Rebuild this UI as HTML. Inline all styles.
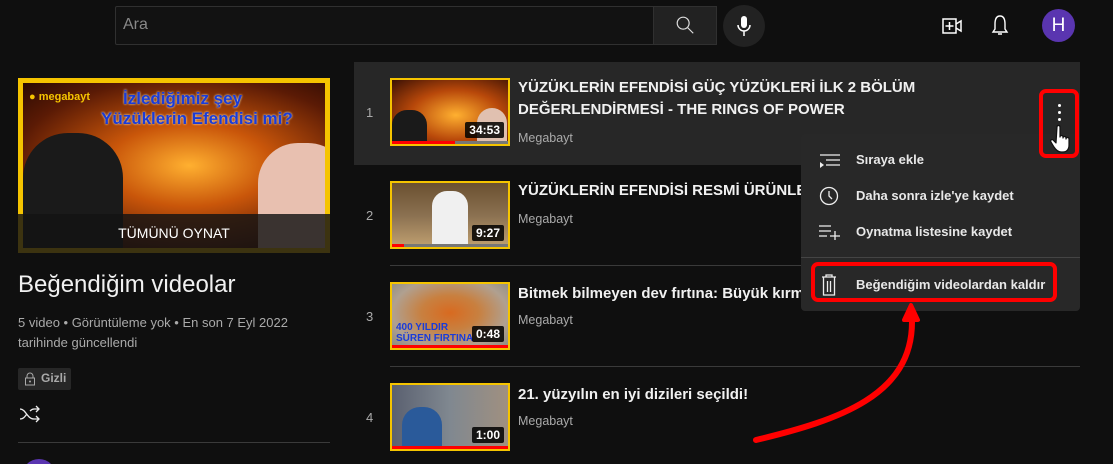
<!DOCTYPE html>
<html><head><meta charset="utf-8"><style>
*{margin:0;padding:0;box-sizing:border-box}
html,body{width:1113px;height:464px;overflow:hidden}
body{background:#0f0f0f;font-family:"Liberation Sans",Arial,sans-serif;color:#f1f1f1;position:relative}
.abs{position:absolute}
.thumb{position:absolute;left:390px;width:120px;height:68px;border:2px solid #f5c400;overflow:hidden}
.dur{position:absolute;right:4px;bottom:6px;background:rgba(0,0,0,.85);color:#fff;font-weight:bold;font-size:12px;padding:1px 4px;border-radius:2px}
.bar{position:absolute;left:0;bottom:0;height:3px;background:#777;width:100%}
.bar i{display:block;height:3px;background:#f00}
.num{position:absolute;left:366px;font-size:13px;color:#aaa}
.t{position:absolute;left:518px;font-size:15px;font-weight:bold;line-height:22px;color:#f1f1f1;white-space:nowrap}
.ch{position:absolute;left:518px;font-size:12.5px;color:#aaa}
.mi{position:absolute;left:856px;font-size:13px;font-weight:bold;color:#e8e8e8}
</style></head><body>
<!-- header -->
<div class="abs" style="left:115px;top:6px;width:539px;height:39px;border:1px solid #303030;background:#121212;border-radius:2px 0 0 2px"></div>
<div class="abs" style="left:123px;top:16px;font-size:16px;color:#888">Ara</div>
<div class="abs" style="left:653px;top:6px;width:64px;height:39px;background:#222;border:1px solid #303030"></div>
<svg class="abs" style="left:674px;top:14px" width="22" height="22" viewBox="0 0 24 24"><circle cx="10" cy="10" r="6.5" fill="none" stroke="#ddd" stroke-width="1.3"/><path d="M15 15l6 6" stroke="#ddd" stroke-width="1.3"/></svg>
<div class="abs" style="left:723px;top:5px;width:42px;height:42px;border-radius:50%;background:#222"></div>
<svg class="abs" style="left:734px;top:14px" width="20" height="24" viewBox="0 0 20 24"><rect x="7" y="2" width="6" height="12" rx="3" fill="#fff"/><path d="M4 11a6 6 0 0012 0M10 17v5" stroke="#fff" stroke-width="1.5" fill="none"/></svg>
<svg class="abs" style="left:940px;top:14px" width="24" height="24" viewBox="0 0 24 24"><rect x="3" y="5" width="13" height="14" fill="none" stroke="#fff" stroke-width="1.5"/><path d="M16 10l5-3v10l-5-3M9.5 8v8M5.5 12h8" stroke="#fff" stroke-width="1.5" fill="none"/></svg>
<svg class="abs" style="left:988px;top:13px" width="24" height="26" viewBox="0 0 24 26"><path d="M12 3c-4 0-5 4-5 8v5l-2 3h14l-2-3v-5c0-4-1-8-5-8zM10 21h4" stroke="#fff" stroke-width="1.4" fill="none"/></svg>
<div class="abs" style="left:1042px;top:9px;width:33px;height:33px;border-radius:50%;background:#5a35b0;color:#fff;font-size:19px;text-align:center;line-height:33px">H</div>
<!-- left panel -->
<div class="abs" style="left:18px;top:78px;width:312px;height:175px;border:5px solid #f5c400;background:radial-gradient(ellipse at 55% 50%,#ffb030 0%,#c9560a 35%,#5a1a05 75%,#2a0a02 100%);overflow:hidden">
<div class="abs" style="left:0;top:50px;width:100px;height:140px;background:#1a1a1a;border-radius:45px 45px 0 0"></div>
<div class="abs" style="left:235px;top:60px;width:90px;height:120px;background:#e8c0b0;border-radius:40px 40px 0 0"></div>
<div class="abs" style="left:100px;top:6px;font-size:17px;font-weight:bold;color:#1a3bd8;text-shadow:0 0 2px #ffd">İzlediğimiz şey</div>
<div class="abs" style="left:78px;top:26px;font-size:17px;font-weight:bold;color:#1a3bd8;text-shadow:0 0 2px #ffd">Yüzüklerin Efendisi mi?</div>
<div class="abs" style="left:6px;top:8px;font-size:11px;font-weight:bold;color:#f5c400">● megabayt</div>
</div>
<div class="abs" style="left:18px;top:214px;width:312px;height:39px;background:rgba(20,20,20,.82);text-align:center;font-size:14px;line-height:39px;color:#fff">TÜMÜNÜ OYNAT</div>
<div class="abs" style="left:18px;top:271px;font-size:24px;color:#f1f1f1">Beğendiğim videolar</div>
<div class="abs" style="left:18px;top:313px;font-size:13px;line-height:20px;color:#aaa">5 video • Görüntüleme yok • En son 7 Eyl 2022<br>tarihinde güncellendi</div>
<div class="abs" style="left:18px;top:368px;width:53px;height:22px;background:#272727;border-radius:2px"></div>
<svg class="abs" style="left:24px;top:372px" width="12" height="14" viewBox="0 0 12 14"><path d="M3 6V4a3 3 0 016 0v2" stroke="#aaa" fill="none"/><rect x="1.5" y="6" width="9" height="7" stroke="#aaa" fill="none"/><circle cx="6" cy="9.5" r="1" fill="#aaa"/></svg>
<div class="abs" style="left:41px;top:371px;font-size:12px;font-weight:bold;color:#aaa">Gizli</div>
<svg class="abs" style="left:18px;top:404px" width="24" height="20" viewBox="0 0 24 20"><path d="M2 5c6 0 7 10 14 10h4M2 15c4 0 5-3 7-5M12 7c1-1 2-2 4-2h4M18 2l3 3-3 3M18 12l3 3-3 3" stroke="#eee" stroke-width="1.3" fill="none"/></svg>
<div class="abs" style="left:18px;top:442px;width:312px;height:1px;background:#3a3a3a"></div>
<div class="abs" style="left:22px;top:459px;width:34px;height:5px;overflow:hidden"><div style="width:34px;height:34px;border-radius:50%;background:#5a35b0"></div></div>
<!-- list -->
<div class="abs" style="left:354px;top:62px;width:726px;height:103px;background:#272727"></div>
<div class="abs" style="left:390px;top:265px;width:690px;height:1px;background:#3a3a3a"></div>
<div class="abs" style="left:390px;top:366px;width:690px;height:1px;background:#3a3a3a"></div>

<div class="num" style="top:105px">1</div>
<div class="thumb" style="top:78px;background:radial-gradient(ellipse at 55% 55%,#ffb030,#b8480a 50%,#3a1004)"><div class="abs" style="left:0;top:30px;width:35px;height:40px;background:#1a1a1a;border-radius:15px 15px 0 0"></div><div class="abs" style="left:85px;top:28px;width:30px;height:40px;background:#e0c0b0;border-radius:15px 15px 0 0"></div><div class="dur">34:53</div><div class="bar"><i style="width:54%"></i></div></div>
<div class="t" style="top:77px">YÜZÜKLERİN EFENDİSİ GÜÇ YÜZÜKLERİ İLK 2 BÖLÜM<br>DEĞERLENDİRMESİ - THE RINGS OF POWER</div>
<div class="ch" style="top:131px">Megabayt</div>

<div class="num" style="top:208px">2</div>
<div class="thumb" style="top:181px;background:linear-gradient(180deg,#6a5030,#8a7050 50%,#c0a070)"><div class="abs" style="left:40px;top:8px;width:36px;height:60px;background:#f0f0f0;border-radius:15px 15px 0 0"></div><div class="dur">9:27</div><div class="bar"><i style="width:10%"></i></div></div>
<div class="t" style="top:180px">YÜZÜKLERİN EFENDİSİ RESMİ ÜRÜNLERİ</div>
<div class="ch" style="top:212px">Megabayt</div>

<div class="num" style="top:309px">3</div>
<div class="thumb" style="top:282px;background:radial-gradient(ellipse at 50% 45%,#d86a20,#c88040 35%,#b0a090 70%,#8a8a80)"><div class="abs" style="left:4px;top:38px;font-size:10px;font-weight:bold;color:#1a3bd8">400 YILDIR<br>SÜREN FIRTINA</div><div class="dur">0:48</div><div class="bar"><i style="width:100%"></i></div></div>
<div class="t" style="top:283px">Bitmek bilmeyen dev fırtına: Büyük kırmızı leke</div>
<div class="ch" style="top:313px">Megabayt</div>

<div class="num" style="top:410px">4</div>
<div class="thumb" style="top:383px;background:linear-gradient(90deg,#5a6070,#808890 50%,#a09080)"><div class="abs" style="left:10px;top:22px;width:40px;height:50px;background:#2a5a9a;border-radius:18px 18px 0 0"></div><div class="dur">1:00</div><div class="bar"><i style="width:100%"></i></div></div>
<div class="t" style="top:384px">21. yüzyılın en iyi dizileri seçildi!</div>
<div class="ch" style="top:414px">Megabayt</div>

<!-- menu -->
<div class="abs" style="left:801px;top:134px;width:279px;height:177px;background:#282828;border-radius:4px"></div>
<div class="abs" style="left:801px;top:257px;width:279px;height:1px;background:#444"></div>
<svg class="abs" style="left:818px;top:150px" width="24" height="20" viewBox="0 0 24 20"><path d="M2 5h20M8 10h14M8 15h14" stroke="#eee" stroke-width="1.2"/><path d="M2 12v6l4-3z" fill="#eee"/></svg>
<div class="mi" style="top:152px">Sıraya ekle</div>
<svg class="abs" style="left:818px;top:185px" width="22" height="22" viewBox="0 0 22 22"><circle cx="11" cy="11" r="8.5" stroke="#eee" stroke-width="1.3" fill="none"/><path d="M11 6v5l3 3" stroke="#eee" stroke-width="1.3" fill="none"/></svg>
<div class="mi" style="top:188px">Daha sonra izle'ye kaydet</div>
<svg class="abs" style="left:818px;top:222px" width="24" height="18" viewBox="0 0 24 18"><path d="M1 4h12M1 9h12M1 14h8M12 14h10M17 9v10" stroke="#eee" stroke-width="1.3"/></svg>
<div class="mi" style="top:224px">Oynatma listesine kaydet</div>
<svg class="abs" style="left:820px;top:273px" width="18" height="24" viewBox="0 0 18 24"><path d="M2 4h14M6 4V2h6v2M3.5 4v18h11V4M7.5 8v11M10.5 8v11" stroke="#eee" stroke-width="1.3" fill="none"/></svg>
<div class="mi" style="top:277px">Beğendiğim videolardan kaldır</div>
<div class="abs" style="left:811px;top:262px;width:246px;height:40px;border:4px solid #f00;border-radius:7px"></div>
<!-- dots -->
<div class="abs" style="left:1039px;top:89px;width:40px;height:69px;border:4px solid #f00;border-radius:7px"></div>
<div class="abs" style="left:1058px;top:104px;width:3px;height:3px;background:#fff;border-radius:50%;box-shadow:0 7px 0 #fff,0 14px 0 #fff"></div>
<svg class="abs" style="left:1050px;top:124px" width="24" height="30" viewBox="0 0 24 30"><path d="M7 3c0-2 3-2 3 0v10c0-2 3-2 3 0v1c0-2 3-2 3 0v1c0-2 3-2 3 0v6c0 4-2 7-6 7h-2c-3 0-5-2-7-5l-3-5c-1-2 1-3 2-2l3 3z" fill="#fff" stroke="#111" stroke-width="1.2" stroke-linejoin="round"/></svg>
<!-- arrow -->
<svg class="abs" style="left:0;top:0" width="1113" height="464"><path d="M756 440C840 420 912 395 912 322" stroke="#f00" stroke-width="6" fill="none" stroke-linecap="round"/><path d="M904 320L911 305L918 320Z" fill="#f00" stroke="#f00" stroke-width="4" stroke-linejoin="round"/></svg>
</body></html>
